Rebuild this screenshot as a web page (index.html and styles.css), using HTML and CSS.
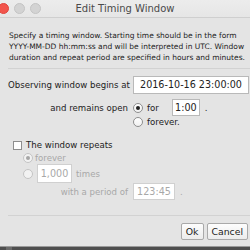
FILE: index.html
```html
<!DOCTYPE html>
<html>
<head>
<meta charset="utf-8">
<title>Edit Timing Window</title>
<link rel="stylesheet" href="styles.css">
</head>
<body>
	<div class="dialog">
		<div class="titlebar">
			<span class="light red"></span>
			<span class="light"></span>
			<span class="light"></span>
			<span class="title">Edit Timing Window</span>
		</div>
		<div class="content">
			<p class="intro">Specify a timing window. Starting time should be in the form YYYY-MM-DD hh:mm:ss and will be interpreted in UTC. Window duration and repeat period are specified in hours and minutes.</p>
			<div class="rule"></div>
			<div class="row begin">
				<span class="label">Observing window begins at</span>
				<span class="field wide">2016-10-16 23:00:00</span>
			</div>
			<div class="row open">
				<span class="label">and remains open</span>
				<span class="radio on"></span>
				<span class="opt">for</span>
				<span class="field small">1:00</span>
				<span class="dot">.</span>
			</div>
			<div class="row forever">
				<span class="label"></span>
				<span class="radio"></span>
				<span class="opt">forever.</span>
			</div>
			<div class="row repeats">
				<span class="check"></span>
				<span class="opt">The window repeats</span>
			</div>
			<div class="off">
				<div class="row sub">
					<span class="radio on"></span>
					<span>forever</span>
				</div>
				<div class="row sub times">
					<span class="radio"></span>
					<span class="field count">1,000</span>
					<span class="opt">times</span>
				</div>
				<div class="row period">
					<span class="label">with a period of</span>
					<span class="field mid">123:45</span>
					<span class="dot">.</span>
				</div>
			</div>
			<div class="rule low"></div>
			<div class="buttons">
				<span class="btn">Ok</span>
				<span class="btn">Cancel</span>
			</div>
		</div>
		<div class="dock"><span class="notch"></span></div>
	</div>
</body>
</html>
```
FILE: styles.css
```css
html, body {
	margin: 0;
	padding: 0;
}

body {
	width: 250px;
	height: 250px;
	overflow: hidden;
	background: #e4e4e4;
	font-family: "DejaVu Sans", "Liberation Sans", sans-serif;
	color: #222;
}

.dialog {
	height: 250px;
	display: flex;
	flex-direction: column;
}

.titlebar {
	height: 17px;
	border-bottom: 1px solid #cfcfcf;
	background: linear-gradient(#ececec, #e6e6e6);
	display: flex;
	align-items: center;
	position: relative;
	flex: none;
}

.light {
	width: 9px;
	height: 9px;
	border-radius: 50%;
	background: #d3d3d3;
	border: 0.5px solid #c4c4c4;
	margin-left: 5px;
}

.light.red {
	background: #f2554c;
	border-color: #e0443c;
	margin-left: -2px;
}

.title {
	position: absolute;
	left: 0;
	right: 0;
	text-align: center;
	font-size: 10px;
	color: #4a4a4a;
}

.content {
	flex: 1;
	padding: 0 0 0 8px;
}

.intro {
	margin: 12px 0 0 1px;
	font-size: 7.5px;
	line-height: 11px;
}

.rule {
	height: 1px;
	background: #d2d2d2;
	margin-top: 5px;
}

.rule.low {
	margin-top: 15px;
}

.row {
	display: flex;
	align-items: center;
	font-size: 8.6px;
	white-space: nowrap;
}

.label {
	width: 120px;
	text-align: right;
	margin-right: 5px;
	flex: none;
}

.begin {
	margin-top: 7px;
	height: 18px;
}

.open {
	margin-top: 5px;
	height: 17px;
}

.forever {
	height: 12px;
}

.field {
	background: #fff;
	border: 1px solid #b9b9b9;
	height: 16px;
	line-height: 16px;
	text-align: center;
	font-size: 9.6px;
}

.field.wide {
	width: 114px;
}

.field.small {
	width: 26px;
	height: 15px;
	line-height: 15px;
	margin-left: 13px;
}

.field.count {
	width: 33px;
	margin-left: 2px;
}

.field.mid {
	width: 40px;
	height: 15px;
	line-height: 15px;
}

.dot {
	margin-left: 5px;
}

.radio {
	width: 8px;
	height: 8px;
	border-radius: 50%;
	border: 1px solid #8e8e8e;
	background: linear-gradient(#fff, #f0f0f0);
	margin-right: 4px;
	position: relative;
	flex: none;
}

.radio.on::after {
	content: "";
	position: absolute;
	left: 2px;
	top: 2px;
	width: 4px;
	height: 4px;
	border-radius: 50%;
	background: #222;
}

.check {
	width: 7px;
	height: 7px;
	border: 1px solid #8e8e8e;
	background: #fff;
	margin: 0 4px 0 5px;
}

.repeats {
	margin-top: 10px;
	height: 14px;
}

.off {
	color: #a8a8a8;
}

.off .radio {
	border-color: #c4c4c4;
	background: #f2f2f2;
	margin-right: 2px;
}

.off .radio.on::after {
	background: #a6a6a6;
}

.off .field {
	border-color: #d0d0d0;
	color: #a8a8a8;
}

.sub {
	padding-left: 15px;
}

.sub:first-child {
	height: 12px;
}

.times {
	height: 19px;
}

.times .field {
	height: 17px;
	line-height: 17px;
}

.times .opt {
	margin-left: 4px;
}

.period {
	height: 17px;
}

.buttons {
	display: flex;
	justify-content: flex-end;
	gap: 3px;
	margin-top: 7px;
	padding-right: 2px;
}

.btn {
	font-size: 9.3px;
	height: 15px;
	line-height: 15px;
	padding: 0 4px;
	border: 1px solid #a9a9a9;
	border-radius: 2px;
	background: linear-gradient(#fdfdfd, #ececec);
}

.dock {
	flex: none;
	height: 3px;
	background: #4e4e4e;
	border-top: 1px solid #9a9a9a;
	display: flex;
}

.notch {
	width: 6px;
	height: 3px;
	margin-left: 6px;
	background: #6a6a6a;
}
```
